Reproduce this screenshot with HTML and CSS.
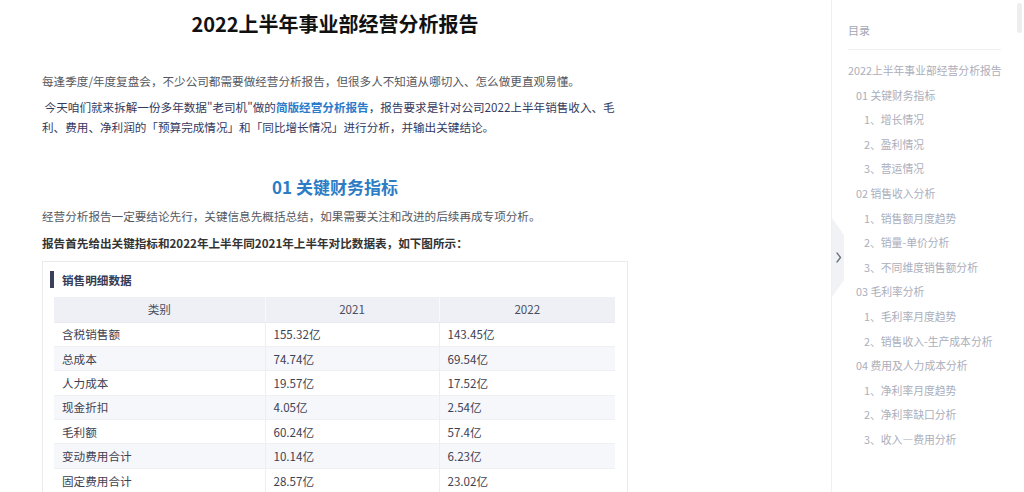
FILE: index.html
```html
<!DOCTYPE html>
<html lang="zh-CN">
<head>
<meta charset="utf-8">
<title>2022上半年事业部经营分析报告</title>
<link rel="stylesheet" href="styles.css">
</head>
<body>
<div class="page">
  <main class="article">
    <h1 class="title">2022上半年事业部经营分析报告</h1>
    <p class="p-gray p-first">每逢季度/年度复盘会，不少公司都需要做经营分析报告，但很多人不知道从哪切入、怎么做更直观易懂。</p>
    <p class="p-navy">&nbsp;今天咱们就来拆解一份多年数据"老司机"做的<a class="link">简版经营分析报告</a>，报告要求是针对公司2022上半年销售收入、毛利、费用、净利润的「预算完成情况」和「同比增长情况」进行分析，并输出关键结论。</p>
    <h2 class="section">01 关键财务指标</h2>
    <p class="p-gray">经营分析报告一定要结论先行，关键信息先概括总结，如果需要关注和改进的后续再成专项分析。</p>
    <p class="p-bold">报告首先给出关键指标和2022年上半年同2021年上半年对比数据表，如下图所示：</p>
    <div class="card">
      <div class="card-head"><span class="bar"></span><span class="card-title">销售明细数据</span></div>
      <table class="data">
        <colgroup><col class="c1"><col class="c2"><col class="c3"></colgroup>
        <thead><tr><th>类别</th><th>2021</th><th>2022</th></tr></thead>
        <tbody>
          <tr><td>含税销售额</td><td>155.32亿</td><td>143.45亿</td></tr>
          <tr><td>总成本</td><td>74.74亿</td><td>69.54亿</td></tr>
          <tr><td>人力成本</td><td>19.57亿</td><td>17.52亿</td></tr>
          <tr><td>现金折扣</td><td>4.05亿</td><td>2.54亿</td></tr>
          <tr><td>毛利额</td><td>60.24亿</td><td>57.4亿</td></tr>
          <tr><td>变动费用合计</td><td>10.14亿</td><td>6.23亿</td></tr>
          <tr><td>固定费用合计</td><td>28.57亿</td><td>23.02亿</td></tr>
        </tbody>
      </table>
    </div>
  </main>
  <aside class="toc">
    <div class="scroll-thumb"></div>
    <div class="toggle">
      <svg width="13" height="80" viewBox="0 0 13 80"><polygon points="0,0 12,17 12,62 0,79" fill="#f1f2f5"/><polyline points="5,35 8.5,39.5 5,44" fill="none" stroke="#6b6f80" stroke-width="1.3" stroke-linecap="round" stroke-linejoin="round"/></svg>
    </div>
    <div class="toc-title">目录</div>
    <ul class="toc-list">
      <li class="l1">2022上半年事业部经营分析报告</li>
      <li class="l2">01 关键财务指标</li>
      <li class="l3">1、增长情况</li>
      <li class="l3">2、盈利情况</li>
      <li class="l3">3、营运情况</li>
      <li class="l2">02 销售收入分析</li>
      <li class="l3">1、销售额月度趋势</li>
      <li class="l3">2、销量-单价分析</li>
      <li class="l3">3、不同维度销售额分析</li>
      <li class="l2">03 毛利率分析</li>
      <li class="l3">1、毛利率月度趋势</li>
      <li class="l3">2、销售收入-生产成本分析</li>
      <li class="l2">04 费用及人力成本分析</li>
      <li class="l3">1、净利率月度趋势</li>
      <li class="l3">2、净利率缺口分析</li>
      <li class="l3">3、收入—费用分析</li>
    </ul>
  </aside>
</div>
</body>
</html>
```

FILE: styles.css
```css
* { box-sizing: border-box; }
html, body { margin: 0; padding: 0; background: #fff; }
body {
  font-family: "Noto Sans CJK SC", "Noto Sans", sans-serif;
  width: 1024px;
  height: 492px;
  overflow: hidden;
}
.page {
  display: flex;
  height: 492px;
}
.article {
  width: 831px;
  padding: 10px 0 0 42px;
}
.article > * { width: 586px; }
.title {
  margin: 0;
  font-size: 20px;
  line-height: 28px;
  font-weight: 700;
  color: #111;
  text-align: center;
}
p {
  margin: 7px 0 0;
  font-size: 11.6px;
  line-height: 20px;
}
.p-first { margin-top: 33px; }
.p-gray { color: #555860; }
.p-navy { color: #33395e; line-height: 19.5px; }
.link { color: #2a7ccb; font-weight: 700; }
.p-bold { color: #333; font-weight: 700; }
.section {
  margin: 38px 0 0;
  font-size: 17px;
  line-height: 24px;
  font-weight: 700;
  color: #2d7cc4;
  text-align: center;
}
.card {
  margin-top: 8px;
  border: 1px solid #ebebed;
  border-bottom: none;
  padding: 9px 11px 0 11px;
  height: 240px;
}
.card-head {
  display: flex;
  align-items: center;
  gap: 8px;
  margin-left: -4px;
  height: 17px;
}
.bar {
  width: 4px;
  height: 17px;
  background: #3a3f5c;
}
.card-title {
  font-size: 11.6px;
  font-weight: 700;
  color: #363a52;
}
.data {
  margin-top: 9px;
  width: 561px;
  border-collapse: collapse;
  table-layout: fixed;
  font-size: 11.6px;
  color: #3e4152;
}
.c1 { width: 211px; }
.c2 { width: 174px; }
.c3 { width: 176px; }
.data th {
  background: #eef0f5;
  font-weight: 400;
  height: 25px;
  padding: 0;
  border-left: 1px solid #f8f9fb;
  border-bottom: 1px solid #e8eaef;
  color: #4a4d5e;
}
.data th:first-child { border-left: none; }
.data td {
  height: 24.4px;
  padding: 0 8px;
  border-left: 1px solid #eceef2;
  border-bottom: 1px solid #eef0f3;
}
.data td:first-child { border-left: none; }
.data tbody tr:nth-child(even) td { background: #f6f7fa; }
.toc {
  position: relative;
  width: 193px;
  border-left: 1px solid #f0f0f2;
  padding: 20px 20px 0 16px;
  color: #abaebb;
  font-size: 10.8px;
}
.scroll-thumb {
  position: absolute;
  right: 2px;
  top: 3px;
  width: 5px;
  height: 30px;
  border-radius: 3px;
  background: #eeeef0;
}
.toggle {
  position: absolute;
  left: 0;
  top: 218px;
  width: 13px;
  height: 80px;
}
.toggle svg { display: block; }
.toc-title {
  font-size: 11px;
  line-height: 20px;
  color: #a3a6b2;
  padding-bottom: 9px;
  border-bottom: 1px solid #eeeff2;
  margin-right: 3px;
}
.toc-list {
  list-style: none;
  margin: 8px 0 0;
  padding: 0;
}
.toc-list li {
  line-height: 24.6px;
  white-space: nowrap;
}
.l2 { padding-left: 8px; }
.l3 { padding-left: 16px; }
```
